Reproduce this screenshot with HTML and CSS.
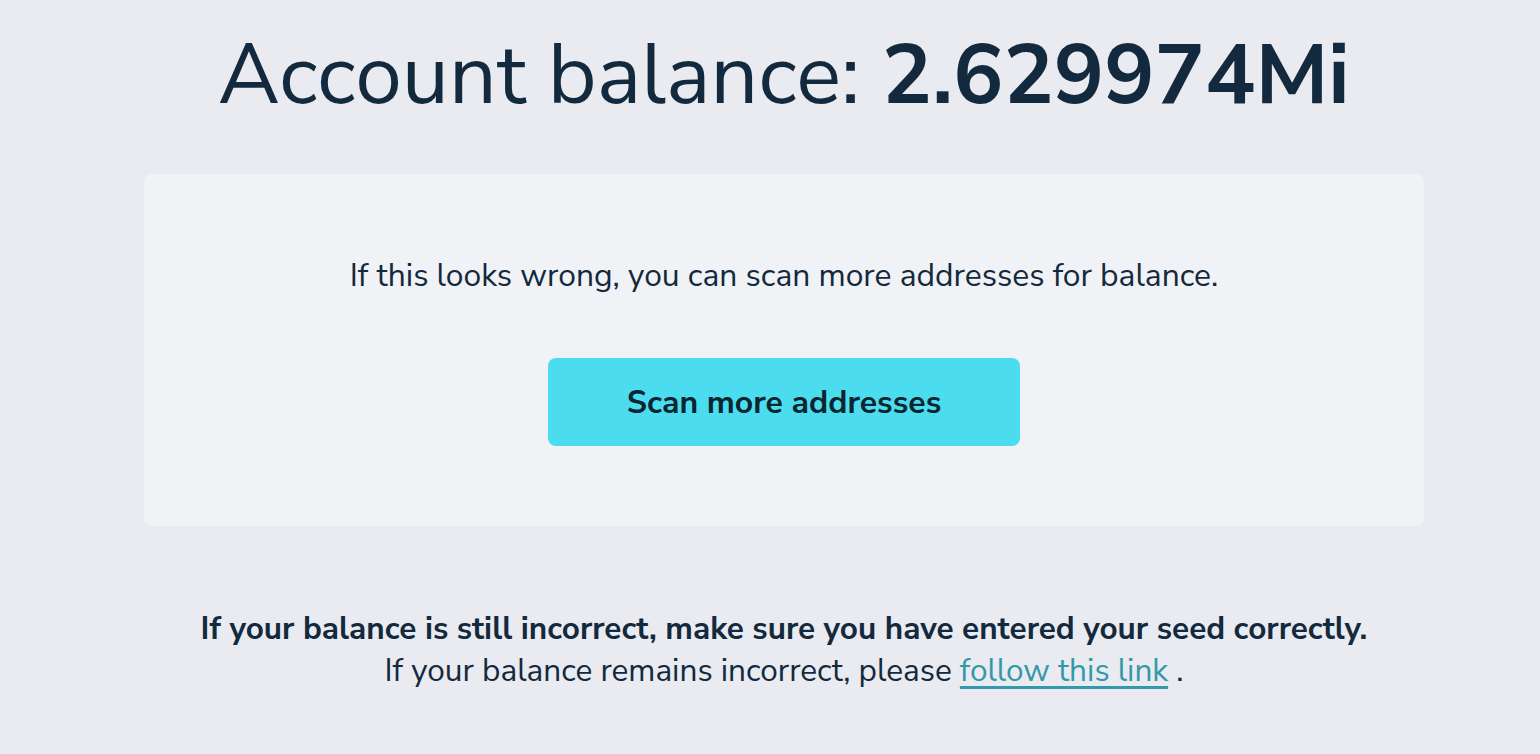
FILE: index.html
```html
<!DOCTYPE html>
<html>
<head>
<meta charset="utf-8">
<link rel="stylesheet" href="styles.css">
</head>
<body>
<main class="page">
  <h1 class="title">Account balance: <strong>2.629974Mi</strong></h1>
  <section class="card">
    <p class="card-text">If this looks wrong, you can scan more addresses for balance.</p>
    <button class="scan-btn">Scan more addresses</button>
  </section>
  <div class="footer-note">
    <p class="note-bold">If your balance is still incorrect, make sure you have entered your seed correctly.</p>
    <p class="note">If your balance remains incorrect, please <a href="#" class="link">follow this link</a> .</p>
  </div>
</main>
</body>
</html>
```

FILE: styles.css
```css
html, body {
  margin: 0;
  padding: 0;
  background: #e9ebf0;
  font-family: "Nunito Sans", Lato, "Noto Sans", sans-serif;
  color: #13293d;
}
.page {
  width: 1280px;
  margin-left: 144px;
  display: flex;
  flex-direction: column;
  align-items: center;
}
.title {
  margin: 26px 0 0;
  font-size: 84px;
  font-weight: 400;
  line-height: 100px;
  white-space: nowrap;
}
.title strong {
  font-weight: 700;
}
.card {
  box-sizing: border-box;
  width: 1280px;
  margin-top: 48px;
  height: 352px;
  background: #f0f2f6;
  border-radius: 8px;
  display: flex;
  flex-direction: column;
  align-items: center;
  padding-top: 82px;
}
.card-text {
  margin: 0;
  font-size: 31.8px;
  line-height: 40px;
}
.scan-btn {
  margin-top: 62px;
  width: 472px;
  height: 88px;
  border: none;
  border-radius: 8px;
  background: #4cdcf0;
  color: #0c2630;
  font-family: inherit;
  font-size: 32px;
  font-weight: 700;
}
.footer-note {
  margin-top: 82px;
  text-align: center;
}
.note-bold {
  margin: 0;
  font-size: 31.5px;
  font-weight: 700;
  line-height: 42px;
}
.note {
  margin: 0;
  font-size: 31.6px;
  line-height: 42px;
}
.link {
  color: #3399aa;
  text-decoration: underline;
  text-underline-offset: 5px;
}
```
